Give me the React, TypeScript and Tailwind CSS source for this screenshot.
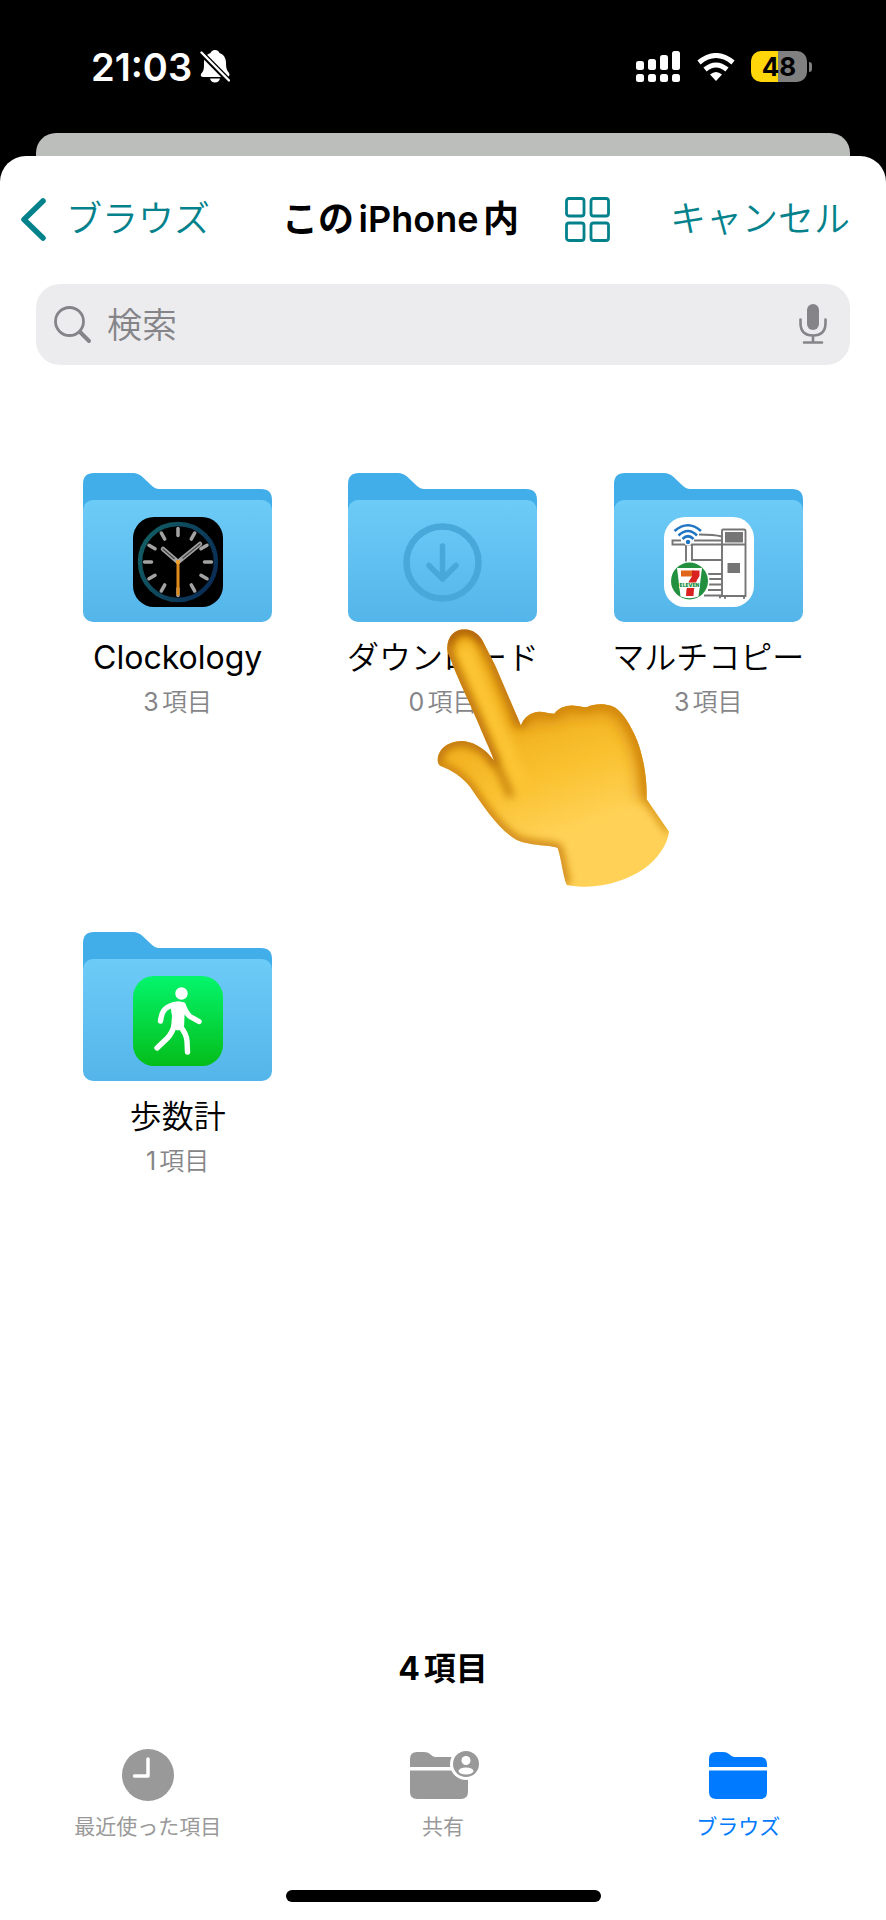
import type { ReactNode } from "react";

type Folder = {
  name: string;
  count: number;
  icon: ReactNode;
  latin?: boolean;
  pointed?: boolean;
};

type Tab = {
  label: string;
  icon: ReactNode;
  active?: boolean;
};

const clockTicks = [0, 30, 60, 90, 120, 150, 180, 210, 240, 270, 300, 330];

function ClockIcon() {
  return (
    <g transform="translate(50 44)">
      <rect width="90" height="90" rx="21" fill="#000" />
      <circle cx="45" cy="45" r="38" fill="none" stroke="url(#clockRing)" strokeWidth="4.500" />
      {clockTicks.map((angle) => (
        <path
          key={angle}
          d="M45 11.500V18.500"
          stroke="#a3a3a3"
          strokeWidth="3.500"
          strokeLinecap="round"
          transform={`rotate(${angle} 45 45)`}
        />
      ))}
      <path d="M45 45L30 32M45 45L67 27" stroke="#a3a3a3" strokeWidth="4.500" strokeLinecap="round" />
      <path d="M41 41.500L30 32M50 41L67 27" stroke="#4a4a4a" strokeWidth="1.500" strokeLinecap="round" />
      <path d="M45 45V77" stroke="#e08a1c" strokeWidth="3" strokeLinecap="round" />
      <circle cx="45" cy="45" r="2.200" fill="#f0a030" />
    </g>
  );
}

function DownloadIcon() {
  return (
    <g fill="none" stroke="#47a8d9" strokeLinecap="round" strokeLinejoin="round">
      <circle cx="94.500" cy="89.500" r="36" strokeWidth="6.500" />
      <path d="M94.500 73V105M81 92.500L94.500 106L108 92.500" strokeWidth="5.500" />
    </g>
  );
}

function CopierIcon() {
  return (
    <g transform="translate(50 44)">
      <rect width="90" height="90" rx="21" fill="#fff" />
      <g fill="none" stroke="#757575" strokeWidth="1.900">
        <path d="M58 79V13.500Q58 12.500 59 12.500H80Q81.500 12.500 81.500 14V79Z" />
        <path d="M58 27.500H81.500M35 17.500Q50 17.500 58 19.500" />
        <path d="M17 23.500H8.500V27.500H58M30 23.500H58" />
        <path d="M22 27.500V45M28 27.500V43H58" />
        <path d="M44 57H58M45 62H58M45 67.500H58M44 73H58M40 78.500H58" />
        <path d="M55 80H57M60 80.500H62M79 80.500H81" strokeWidth="2.500" />
      </g>
      <rect x="61" y="15" width="18" height="10.500" fill="#757575" />
      <rect x="63.500" y="46" width="12.500" height="10" fill="#757575" />
      <g fill="none" stroke="#1f75c4" strokeWidth="2.600">
        <path d="M10.500 14Q24 2.500 37 14" />
        <path d="M14.500 18.500Q24 9.500 33 18.500" />
        <path d="M18.500 22Q24 16.500 29.500 22" />
      </g>
      <circle cx="24" cy="25" r="3.500" fill="#fff" />
      <circle cx="24" cy="25" r="2.200" fill="#1f75c4" />
      <circle cx="25.500" cy="64" r="20" fill="#fff" />
      <circle cx="25.500" cy="64" r="18.500" fill="#22903f" />
      <path d="M13 51H38L34.500 79.500Q25 83 16.500 79.500Z" fill="#fff" />
      <path d="M17 53.500H30V59.500H17Z" fill="#e0661c" />
      <path d="M28 53.500H35.500V59Q29.500 67 29.500 79H22Q22 67 28 59.500Z" fill="#d9211f" />
      <rect x="15" y="65.500" width="21" height="5.500" fill="#fff" />
      <text
        x="25.500"
        y="70.300"
        textAnchor="middle"
        className="fill-[#22903f] font-[Inter,sans-serif] text-[5px] font-black"
      >
        ELEVEN
      </text>
    </g>
  );
}

function WalkIcon() {
  return (
    <g transform="translate(50 44)">
      <rect width="90" height="90" rx="21" fill="url(#walkFill)" />
      <circle cx="48.500" cy="17.500" r="6.200" fill="#fff" />
      <path
        d="M37 28Q44 23 52 27L53 30L51.500 40L51 52L45 54.500L38 52.500L39 40Z"
        fill="#fff"
      />
      <g fill="none" stroke="#fff" strokeWidth="5.400" strokeLinecap="round" strokeLinejoin="round">
        <path d="M41 28.500Q33 31 30.500 35Q28.500 38 27.500 45" />
        <path d="M50 29Q53 37 57 40.500L66 45.500" />
        <path d="M41 50Q39 57.500 34 62.500L24 72" />
        <path d="M47 50Q53.500 58 54 65L54.500 76" />
      </g>
    </g>
  );
}

function FolderShape({ children }: { children: ReactNode }) {
  return (
    <svg viewBox="0 0 189 149" className="h-[149px] w-[189px]" aria-hidden="true">
      <path
        d="M0 11Q0 0 11 0H50Q55 0 59 3.500L68 12Q72 16 76 16H178Q189 16 189 27V60H0Z"
        fill="#41ade9"
      />
      <rect y="27" width="189" height="122" rx="10" fill="url(#folderFront)" />
      {children}
    </svg>
  );
}

const handOutline =
  "M82 118C80 80 105 58 133 58C160 59 180 75 190 97L225 165L303 347C310 325 330 305 360 305C378 306 390 311 403 311C415 294 440 285 462 287C480 288 490 293 502 291C520 282 550 280 575 288C602 297 625 335 643 372C668 425 682 500 680 568L747 665C743 702 715 745 670 778C615 815 530 842 440 825C428 795 424 745 413 714C395 705 330 708 290 690C240 662 190 590 150 530C125 500 95 480 62 468C48 460 52 438 60 425C75 400 110 390 135 394C170 400 198 420 222 452C215 430 205 410 190 375C160 300 110 200 95 155C88 140 83 130 82 118Z";

function PointingHand() {
  return (
    <svg
      viewBox="0 0 810 900"
      className="absolute top-[137px] left-1/2 z-10 -ml-[23px] h-[300px] w-[270px]"
      aria-hidden="true"
    >
      <defs>
        <clipPath id="handClip">
          <path d={handOutline} />
        </clipPath>
        <linearGradient id="handFill" gradientUnits="userSpaceOnUse" x1="400" y1="280" x2="530" y2="640">
          <stop offset="0" stopColor="#efae1d" />
          <stop offset="0.500" stopColor="#fac12f" />
          <stop offset="1" stopColor="#ffd257" />
        </linearGradient>
        <filter id="soft" filterUnits="userSpaceOnUse" x="0" y="0" width="810" height="900">
          <feGaussianBlur stdDeviation="12" />
        </filter>
        <filter id="softWide" filterUnits="userSpaceOnUse" x="0" y="0" width="810" height="900">
          <feGaussianBlur stdDeviation="22" />
        </filter>
      </defs>
      <g clipPath="url(#handClip)">
        <rect width="810" height="900" fill="url(#handFill)" />
        <path d="M125 110L300 530" stroke="#fcc430" strokeWidth="60" filter="url(#soft)" />
        <g fill="none" strokeLinejoin="round">
          {/* knuckles and back of the hand */}
          <path
            d="M303 347C310 325 330 305 360 305C378 306 390 311 403 311C415 294 440 285 462 287C480 288 490 293 502 291C520 282 550 280 575 288C602 297 625 335 643 372C668 425 682 500 680 568"
            stroke="#dc9212"
            strokeWidth="56"
            filter="url(#softWide)"
          />
          <path
            d="M303 347C310 325 330 305 360 305C378 306 390 311 403 311C415 294 440 285 462 287C480 288 490 293 502 291C520 282 550 280 575 288C602 297 625 335 643 372C668 425 682 500 680 568L747 665"
            stroke="#c97e0c"
            strokeWidth="16"
            filter="url(#soft)"
          />
          {/* wrist, thumb and index finger */}
          <path
            d="M440 825C428 795 424 745 413 714C395 705 330 708 290 690C240 662 190 590 150 530C125 500 95 480 62 468"
            stroke="#c87c0a"
            strokeWidth="24"
            filter="url(#soft)"
          />
          <path
            d="M62 468C48 460 52 438 60 425C75 400 110 390 135 394C170 400 198 420 222 452C215 430 205 410 190 375C160 300 110 200 95 155C88 140 83 130 82 118C80 80 105 58 133 58C160 59 180 75 190 97L225 165L303 347"
            stroke="#bd7208"
            strokeWidth="30"
            filter="url(#soft)"
          />
          <path
            d="M222 452Q250 500 270 555"
            stroke="#b56c08"
            strokeWidth="16"
            strokeLinecap="round"
            filter="url(#soft)"
          />
          <path
            d="M85 105C85 80 105 60 133 58C160 59 178 72 190 97"
            stroke="#a85a0c"
            strokeWidth="18"
            filter="url(#soft)"
          />
        </g>
      </g>
    </svg>
  );
}

function TabFolderShape() {
  return (
    <>
      <path d="M0 15V7Q0 0 7 0H14Q18 0 20 2Q23 5 25 5H51Q58 5 58 12V15Z" />
      <path d="M0 18.500H58V40Q58 47 51 47H7Q0 47 0 40Z" />
    </>
  );
}

const folders: Folder[] = [
  { name: "Clockology", count: 3, icon: <ClockIcon />, latin: true },
  { name: "ダウンロード", count: 0, icon: <DownloadIcon />, pointed: true },
  { name: "マルチコピー", count: 3, icon: <CopierIcon /> },
  { name: "歩数計", count: 1, icon: <WalkIcon /> },
];

const tabs: Tab[] = [
  {
    label: "最近使った項目",
    icon: (
      <svg viewBox="0 0 52 52" className="size-[52px]" aria-hidden="true">
        <circle cx="26" cy="26" r="26" fill="currentColor" />
        <path
          d="M26 10V27H12.500"
          fill="none"
          stroke="#fff"
          strokeWidth="3.500"
          strokeLinecap="round"
          strokeLinejoin="round"
        />
      </svg>
    ),
  },
  {
    label: "共有",
    icon: (
      <svg viewBox="-3 -1 72 48" className="h-12 w-[72px]" fill="currentColor" aria-hidden="true">
        <TabFolderShape />
        <circle cx="56" cy="12" r="16" fill="#fff" />
        <circle cx="56" cy="12" r="13" />
        <circle cx="56" cy="8.500" r="4.500" fill="#fff" />
        <ellipse cx="56" cy="19" rx="7.500" ry="3.500" fill="#fff" />
      </svg>
    ),
  },
  {
    label: "ブラウズ",
    active: true,
    icon: (
      <svg viewBox="0 -1 58 48" className="h-12 w-[58px]" fill="currentColor" aria-hidden="true">
        <TabFolderShape />
      </svg>
    ),
  },
];

function StatusBar() {
  return (
    <div className="flex h-[133px] items-center justify-between pr-[74px] pl-[91px] text-white">
      <div className="flex items-center gap-2">
        <span className="text-[38px] leading-10 font-semibold">21:03</span>
        <svg viewBox="0 0 30 33" className="h-[33px] w-[30px]" aria-hidden="true">
          <path
            d="M15 0C17.500 0 19 1.500 19.500 3C24 4.500 26 8.500 26 12.500C26 19 27 20.500 29 23Q30.500 27 27 27H3Q0 27 1 24C4 20.500 4 19 4 12.500C4 8.500 6 4.500 10.500 3C11 1.500 12.500 0 15 0Z"
            fill="#fff"
          />
          <path d="M10 28.500H20Q19 32.500 15 32.500Q11 32.500 10 28.500Z" fill="#fff" />
          <path d="M0 1.500L29 31" stroke="#000" strokeWidth="5.500" />
          <path d="M1.500 2.500L29 30.500" stroke="#fff" strokeWidth="2.400" strokeLinecap="round" />
        </svg>
      </div>
      <div className="flex items-center gap-4">
        <svg viewBox="0 0 45 31" className="h-[31px] w-[45px]" fill="#fff" aria-hidden="true">
          <rect x="0" y="10" width="8" height="9" rx="2.500" />
          <rect x="12" y="8" width="8" height="11" rx="2.500" />
          <rect x="24" y="4" width="8" height="15" rx="2.500" />
          <rect x="36" y="0" width="8" height="19" rx="2.500" />
          <rect x="0" y="23" width="8" height="8" rx="2.500" />
          <rect x="12" y="23" width="8" height="8" rx="2.500" />
          <rect x="24" y="23" width="8" height="8" rx="2.500" />
          <rect x="36" y="23" width="8" height="8" rx="2.500" />
        </svg>
        <svg viewBox="0 0 38 28" className="h-7 w-[38px]" aria-hidden="true">
          <path d="M2 9.500Q19 -4.500 36 9.500" fill="none" stroke="#fff" strokeWidth="5" />
          <path d="M8 16.500Q19 7.500 30 16.500" fill="none" stroke="#fff" strokeWidth="5" />
          <path d="M13 21.500Q19 16.500 25 21.500L19 28Z" fill="#fff" />
        </svg>
        <div className="flex items-center gap-[2px]">
          <div className="flex h-[31px] w-14 items-center justify-center rounded-[10px] bg-linear-to-r from-[#ffd60a] from-48% to-[#808080] to-48%">
            <span className="text-[26px] leading-[31px] font-bold text-black">48</span>
          </div>
          <div className="h-[10px] w-[3px] rounded-r-full bg-[#808080]" />
        </div>
      </div>
    </div>
  );
}

function Header() {
  return (
    <header className="flex h-[126px] items-center pr-9 pl-5">
      <button
        type="button"
        className="mr-auto flex items-center gap-5 text-[36px] leading-[48px] font-[350] text-[#04828c]"
      >
        <svg viewBox="0 0 26 43" className="h-[43px] w-[26px]" aria-hidden="true">
          <path
            d="M23 3L4 21.500L23 40"
            fill="none"
            stroke="currentColor"
            strokeWidth="5.500"
            strokeLinecap="round"
            strokeLinejoin="round"
          />
        </svg>
        ブラウズ
      </button>
      <h1 className="mr-[46px] text-[36px] leading-[48px] font-semibold text-black [text-autospace:normal]">
        このiPhone内
      </h1>
      <button type="button" aria-label="表示形式" className="mr-[60px] text-[#04828c]">
        <svg
          viewBox="0 0 45 45"
          className="size-[45px]"
          fill="none"
          stroke="currentColor"
          strokeWidth="2.800"
          aria-hidden="true"
        >
          <rect x="1.500" y="1.500" width="17.500" height="17.500" rx="2.500" />
          <rect x="26" y="1.500" width="17.500" height="17.500" rx="2.500" />
          <rect x="1.500" y="26" width="17.500" height="17.500" rx="2.500" />
          <rect x="26" y="26" width="17.500" height="17.500" rx="2.500" />
        </svg>
      </button>
      <button type="button" className="text-[36px] leading-[48px] font-[350] text-[#04828c]">
        キャンセル
      </button>
    </header>
  );
}

function SearchBar() {
  return (
    <div className="mx-9 mt-[2px] flex h-[81px] items-center rounded-3xl bg-[#ececee] pr-[23px] pl-[18px] text-[#858589]">
      <svg viewBox="0 0 38 38" className="size-[38px]" fill="none" stroke="currentColor" aria-hidden="true">
        <circle cx="15.500" cy="15.500" r="14" strokeWidth="2.800" />
        <path d="M26 26L35 35" strokeWidth="4" strokeLinecap="round" />
      </svg>
      <input
        type="search"
        aria-label="検索"
        placeholder="検索"
        className="ml-[15px] min-w-0 flex-1 bg-transparent text-[35px] leading-[48px] font-[350] outline-none placeholder:text-[#858589]"
      />
      <button type="button" aria-label="音声入力">
        <svg viewBox="0 0 28 41" className="h-[41px] w-7" fill="none" stroke="currentColor" aria-hidden="true">
          <rect x="8" y="0" width="12" height="26" rx="6" fill="currentColor" stroke="none" />
          <path
            d="M1.500 15.500V19Q1.500 31.500 14 31.500Q26.500 31.500 26.500 19V15.500M14 32V38.500M5 38.500H23"
            strokeWidth="2.600"
            strokeLinecap="round"
          />
        </svg>
      </button>
    </div>
  );
}

function App() {
  return (
    <div className="flex min-h-screen flex-col bg-black font-[Inter,'Noto_Sans_CJK_JP',sans-serif]" lang="ja">
      <svg className="absolute size-0" aria-hidden="true">
        <defs>
          <linearGradient id="folderFront" x1="0" y1="0" x2="0" y2="1">
            <stop offset="0" stopColor="#6dcbf7" />
            <stop offset="1" stopColor="#54b5ea" />
          </linearGradient>
          <linearGradient id="clockRing" x1="0" y1="0.200" x2="1" y2="0.700">
            <stop offset="0" stopColor="#125e64" />
            <stop offset="1" stopColor="#0a2c55" />
          </linearGradient>
          <linearGradient id="walkFill" x1="0" y1="0" x2="0" y2="1">
            <stop offset="0" stopColor="#04f56c" />
            <stop offset="1" stopColor="#04bd1a" />
          </linearGradient>
        </defs>
      </svg>
      <StatusBar />
      <div className="mx-9 h-[23px] rounded-t-[20px] bg-[#bcbebb]" />
      <div className="flex flex-1 flex-col rounded-t-[26px] bg-white">
        <Header />
        <SearchBar />
        <main className="flex flex-1 flex-col px-[45px] pt-[108px]">
          <ul className="grid auto-rows-[459px] grid-cols-3">
            {folders.map((folder) => (
              <li key={folder.name} className="relative">
                <button type="button" className="flex w-full flex-col items-center">
                  <FolderShape>{folder.icon}</FolderShape>
                  <span
                    className={`mt-4 text-[32px] leading-10 text-black ${
                      folder.latin ? "font-normal" : "font-[350]"
                    }`}
                  >
                    {folder.name}
                  </span>
                  <span className="mt-2 text-[25px] leading-8 font-[350] text-[#858588] [text-autospace:normal]">
                    <span className="font-normal">{folder.count}</span>項目
                  </span>
                </button>
                {folder.pointed ? <PointingHand /> : null}
              </li>
            ))}
          </ul>
          <p className="mt-auto text-center text-[32px] leading-[48px] font-bold text-black [text-autospace:normal]">
            4項目
          </p>
        </main>
        <nav className="mt-14 grid grid-cols-3">
          {tabs.map((tab) => (
            <button
              key={tab.label}
              type="button"
              className={`flex flex-col items-center gap-3 ${
                tab.active ? "text-[#007aff]" : "text-[#999999]"
              }`}
            >
              <span className="flex h-[52px] items-center">{tab.icon}</span>
              <span className="text-[21px] leading-7 font-normal">{tab.label}</span>
            </button>
          ))}
        </nav>
        <div className="mx-auto mt-[49px] mb-[18px] h-3 w-[315px] rounded-full bg-black" />
      </div>
    </div>
  );
}

export default App;
